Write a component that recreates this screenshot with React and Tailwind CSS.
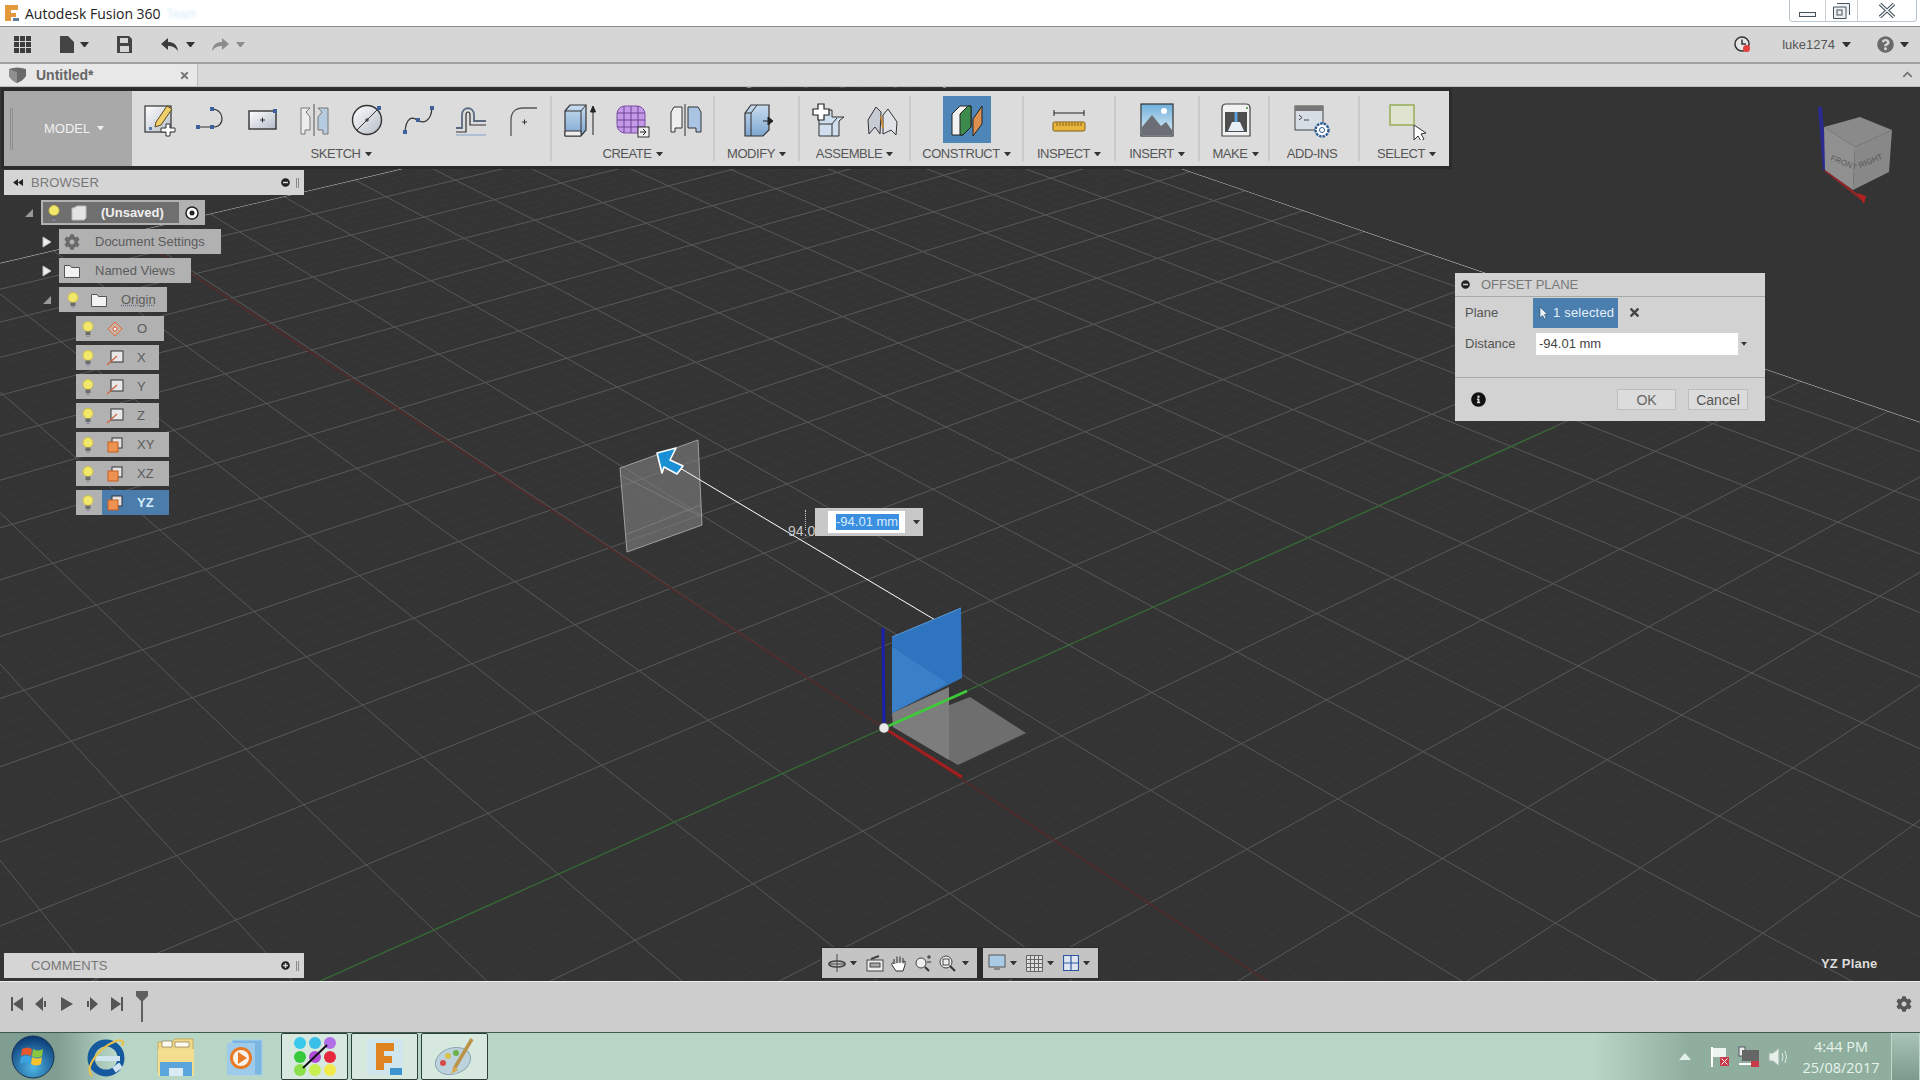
import React from "react";
import { FaCog, FaInfoCircle, FaQuestionCircle, FaTimes, FaChevronUp, FaMinusCircle, FaPlusCircle } from "react-icons/fa";

const Caret = ({ size = 8, color = "#444" }) => (
  <svg width={size} height={size * 0.65} viewBox="0 0 8 5" className="shrink-0">
    <path d="M0 0h8L4 5z" fill={color} />
  </svg>
);

// grid, built from the two vanishing points of the ground plane
const VR = [-1224, -665];
const VG = [3984, -665];
const ORIGIN_Y = 728;
const gridPath = (v, step, from, to) => {
  let d = "";
  for (let k = from; k <= to; k++) {
    const x = 884 + k * step;
    const t = (1000 - v[1]) / (ORIGIN_Y - v[1]);
    d += `M${v[0]} ${v[1]}L${(v[0] + (x - v[0]) * t).toFixed(1)} 1000`;
  }
  return d;
};
const minorPath = gridPath(VR, 33, -120, 200) + gridPath(VG, 38.8, -200, 120);
const majorPath = gridPath(VR, 165, -24, 40) + gridPath(VG, 194, -40, 24);

const Viewport = () => (
  <svg viewBox="0 87 1920 894" className="block h-full w-full">
    <defs>
      <clipPath id="gridClip">
        <path d="M0 263L865 60L1920 422V981H0z" />
      </clipPath>
      <linearGradient id="boxBlue" x1="0" y1="0" x2="0" y2="1">
        <stop offset="0" stopColor="#c8dcf0" />
        <stop offset="1" stopColor="#7ea6cf" />
      </linearGradient>
      <linearGradient id="paper" x1="0" y1="0" x2="1" y2="1">
        <stop offset="0" stopColor="#ffffff" />
        <stop offset="1" stopColor="#b4bcc8" />
      </linearGradient>
      <linearGradient id="sky" x1="0" y1="0" x2="0" y2="1">
        <stop offset="0" stopColor="#6fb0dc" />
        <stop offset="1" stopColor="#e4f0f6" />
      </linearGradient>
    </defs>
    <g clipPath="url(#gridClip)" fill="none">
      <path d={minorPath} stroke="#393939" strokeWidth="1" />
      <path d={majorPath} stroke="#585858" strokeWidth="1" />
    </g>
    <path d="M0 263L865 60M865 60L1920 422" stroke="#d6d6d6" strokeWidth="1" fill="none" clipPath="url(#gridClip)" />
    <path d="M100 214L884 728L1267 981" stroke="#4f2c2c" strokeWidth="2" fill="none" clipPath="url(#gridClip)" />
    <path d="M1555 427L884 728L320 981" stroke="#2f6a2f" strokeWidth="1.2" fill="none" />

    {/* offset plane */}
    <path d="M620 468L698 440L702 525L627 552z" fill="#808080" fillOpacity="0.62" stroke="#a0a0a0" strokeWidth="1" />
    <path d="M622 476L700 516M625 535L701 505" stroke="#9c9c9c" strokeOpacity="0.45" fill="none" />
    <path d="M680 468L947 627" stroke="#fff" strokeWidth="1" />

    {/* origin planes */}
    <path d="M893 727L970 697L1026 733L958 765z" fill="#6e6e6e" />
    <path d="M892 713L949 687V760L893 727z" fill="#7d7d7d" />
    <path d="M892 637L961 608L962 678L892 713z" fill="#2f74bf" />
    <path d="M892 647L947 683L892 713z" fill="#3a80c9" />
    <path d="M892 637L961 608" stroke="#5a9ad8" strokeWidth="1" />
    <path d="M883 628L884 728" stroke="#1a1fb0" strokeWidth="3" />
    <path d="M884 728L962 777" stroke="#a31f1f" strokeWidth="3" />
    <path d="M884 728L967 691" stroke="#3ecb3a" strokeWidth="2.5" />
    <circle cx="884" cy="728" r="5" fill="#e9e9e9" stroke="#444" strokeWidth="0.5" />

    {/* drag handle */}
    <path d="M657 453L676 448L670 460L683 466L677 474L664 467L662 473z" fill="#1b8fd4" stroke="#fff" strokeWidth="1.6" strokeLinejoin="round" />

    {/* view cube */}
    <path d="M1820 107L1825 170" stroke="#2a2a90" strokeWidth="4" />
    <path d="M1825 170L1863 200" stroke="#8f2626" strokeWidth="2.5" />
    <path d="M1857 193L1866 196L1864 204z" fill="#b22222" />
    <path d="M1824 127L1860 117L1892 130L1855 147z" fill="#8a8a8a" />
    <path d="M1824 127L1855 147L1853 190L1825 170z" fill="#909090" />
    <path d="M1855 147L1892 130L1889 172L1853 190z" fill="#888" />
    <text x="1830" y="160" fontSize="8" fill="#5a5a5a" fontFamily="Liberation Sans" transform="rotate(22 1830 160)">FRONT</text>
    <text x="1860" y="168" fontSize="8" fill="#555" fontFamily="Liberation Sans" transform="rotate(-22 1860 168)">RIGHT</text>
  </svg>
);

const Ico = ({ children, size = 40 }) => (
  <svg width={size} height={size} viewBox="0 0 40 40" className="shrink-0">
    {children}
  </svg>
);

const SketchNew = () => (
  <Ico>
    <rect x="6" y="6" width="26" height="26" fill="url(#paper)" stroke="#333" strokeWidth="1.2" />
    <path d="M17 22L28 6L33 9L22 25L16 27z" fill="#f0cf6a" stroke="#5a4a20" />
    <path d="M22 28h5v-4h4v4h5v4h-5v4h-4v-4h-5z" fill="#fff" stroke="#333" />
    <rect x="10" y="27" width="3" height="3" fill="#5a78b0" />
  </Ico>
);
const SketchLine = () => (
  <Ico>
    <path d="M7 27H23C34 27 34 9 21 9" fill="none" stroke="#333" strokeWidth="1.2" />
    <rect x="5" y="25" width="4" height="4" fill="#40609c" />
    <rect x="19" y="25" width="4" height="4" fill="#40609c" />
    <rect x="19" y="7" width="4" height="4" fill="#40609c" />
  </Ico>
);
const SketchRect = () => (
  <Ico>
    <rect x="6" y="11" width="27" height="18" fill="url(#paper)" stroke="#333" strokeWidth="1.4" />
    <path d="M17 20h5M19.5 17.500v5" stroke="#333" />
    <rect x="30" y="9" width="4" height="4" fill="#40609c" />
  </Ico>
);
const SketchMirror = () => (
  <Ico>
    <path d="M19 4v32" stroke="#555" />
    <path d="M15 8H6v26h4v-4h5V17L11 12z" fill="#ececec" stroke="#777" />
    <path d="M23 8h10v26h-5v-4h-5V17l4-5z" fill="#b7cbe0" stroke="#777" />
  </Ico>
);
const SketchCircle = () => (
  <Ico>
    <circle cx="20" cy="20" r="14.500" fill="url(#paper)" stroke="#333" strokeWidth="1.4" />
    <path d="M9 31L31 9" stroke="#333" />
    <path d="M18 20h4M20 18v4" stroke="#333" />
    <rect x="30" y="6" width="4" height="4" fill="#40609c" />
  </Ico>
);
const SketchSpline = () => (
  <Ico>
    <path d="M6 32C7 18 13 16 18 20C24 24 32 22 33 8" fill="none" stroke="#333" strokeWidth="1.2" />
    <rect x="4" y="30" width="4" height="4" fill="#40609c" />
    <rect x="17" y="18" width="4" height="4" fill="#40609c" />
    <rect x="31" y="6" width="4" height="4" fill="#40609c" />
  </Ico>
);
const SketchOffset = () => (
  <Ico>
    <path d="M5 28H11V15C11 6 23 6 23 15V21H35" fill="none" stroke="#5a6a80" strokeWidth="1.8" />
    <path d="M5 32H15V15C15 11 19 11 19 15V25H35" fill="none" stroke="#333" strokeWidth="1.2" />
    <path d="M5 35H35" stroke="#aebfd4" strokeWidth="2" />
  </Ico>
);
const SketchFillet = () => (
  <Ico>
    <path d="M8 36V20C8 12 13 8 20 8H34" fill="none" stroke="#555" strokeWidth="1.3" />
    <path d="M19 22h5M21.500 19.500v5" stroke="#333" />
  </Ico>
);
const CreateBox = () => (
  <Ico>
    <path d="M5 11L10 5H26V30L21 36H5z" fill="url(#boxBlue)" stroke="#333" strokeWidth="1.2" />
    <path d="M5 11H21V36M21 11L26 5" fill="none" stroke="#333" />
    <path d="M5 31H21V36H5z" fill="#eee" stroke="#333" />
    <path d="M33 35V9M30.500 12L33 6L35.500 12z" fill="#222" stroke="#222" />
  </Ico>
);
const CreateForm = () => (
  <Ico>
    <rect x="5" y="6" width="28" height="27" rx="8" fill="#c49ae6" stroke="#7b4fa6" />
    <path d="M5 13H33M5 20H33M5 27H33M12 6V33M19 6V33M26 6V33" stroke="#6f4199" fill="none" />
    <rect x="26" y="27" width="11" height="10" fill="#eee" stroke="#333" />
    <path d="M28 32h6M31 29l3 3-3 3" fill="none" stroke="#222" />
  </Ico>
);
const CreateMirror = () => (
  <Ico>
    <path d="M20 4v32" stroke="#333" />
    <path d="M17 7H9L6 12v20h4v-4h7z" fill="#eee" stroke="#333" />
    <path d="M23 7h10l3 5v20h-5v-4h-8z" fill="#a9c5e3" stroke="#333" />
  </Ico>
);
const ModifyPress = () => (
  <Ico>
    <path d="M8 13L14 5H32V30L26 36H8z" fill="url(#boxBlue)" stroke="#333" strokeWidth="1.2" />
    <path d="M14 13L20 5M14 13V36M14 13H8" fill="none" stroke="#333" />
    <path d="M26 21h8M31 17l5 4-5 4z" fill="#222" stroke="#222" />
  </Ico>
);
const AssembleNew = () => (
  <Ico>
    <path d="M11 14V36H31V21L36 17H24V10H11z" fill="#cfdfee" stroke="#333" />
    <path d="M11 24H24V36M24 24L29 18" fill="none" stroke="#333" />
    <path d="M5 9h5V4h6v5h5v6h-5v5h-6v-5H5z" fill="#fff" stroke="#222" strokeWidth="1.2" />
  </Ico>
);
const AssembleJoint = () => (
  <Ico>
    <path d="M7 34L6 20L14 7L19 12L18 34L13 27z" fill="#c7ccd4" stroke="#333" />
    <path d="M21 34V15L26 9L35 22L34 35L29 30z" fill="#dfe3e8" stroke="#333" />
    <path d="M19 16L21 28" stroke="#c68a3c" strokeWidth="2" />
  </Ico>
);
const ConstructPlane = () => (
  <Ico>
    <path d="M5 14L13 6H24V27L16 35H5z" fill="#f2f2f2" stroke="#222" />
    <path d="M13 14L21 6H24V27L16 35H13z" fill="#3e8a4c" stroke="#222" />
    <path d="M26 36V19L35 6V24z" fill="#dc8f4e" stroke="#222" />
  </Ico>
);
const InspectMeasure = () => (
  <Ico>
    <path d="M5 13H35M5 10V16M35 10V16" stroke="#222" strokeWidth="1" fill="none" />
    <rect x="4" y="22" width="32" height="9" rx="1.5" fill="#e9b53f" stroke="#7c5d14" />
    <path d="M8 23v3M11 23v3M14 23v3M17 23v3M20 23v3M23 23v3M26 23v3M29 23v3M32 23v3" stroke="#7c5d14" />
  </Ico>
);
const InsertImage = () => (
  <Ico>
    <rect x="4" y="4" width="32" height="32" fill="url(#sky)" stroke="#333" strokeWidth="1.2" />
    <circle cx="27" cy="11" r="3" fill="#fff" />
    <path d="M5 35V27L15 15L24 26L29 22L35 30V35z" fill="#6b6f75" />
  </Ico>
);
const MakePrint = () => (
  <Ico>
    <path d="M6 8Q6 4 10 4H30Q34 4 34 8V36H6z" fill="#f2f2f2" stroke="#444" strokeWidth="1.2" />
    <rect x="9" y="12" width="22" height="20" fill="#4e4e4e" />
    <path d="M12 31L16 22H24L28 31z" fill="#e6eef6" />
    <path d="M20 12V22" stroke="#5ba0dc" strokeWidth="3" />
    <circle cx="31" cy="8" r="1" fill="#3a8a3a" />
  </Ico>
);
const AddIns = () => (
  <Ico>
    <rect x="3" y="6" width="28" height="24" fill="#d7dde4" stroke="#444" />
    <rect x="3" y="6" width="28" height="5" fill="#777" />
    <path d="M7 15l3 2.500-3 2.500M12 20h5" fill="none" stroke="#444" />
    <circle cx="30" cy="30" r="6.500" fill="#fff" stroke="#2c5c94" strokeWidth="2.4" strokeDasharray="2.500 1" />
    <circle cx="30" cy="30" r="2.500" fill="#fff" stroke="#2c5c94" />
  </Ico>
);
const SelectWindow = () => (
  <Ico>
    <rect x="3" y="5" width="24" height="20" fill="#dfe3d0" stroke="#9bb060" strokeWidth="1.6" />
    <path d="M27 25V40L31 36L34 41L37 39L34 34L39 33z" fill="#fff" stroke="#333" />
  </Ico>
);

const ToolLabel = ({ label, caret }) => (
  <div className="mt-[4px] flex h-[14px] items-center gap-[4px] text-[13px] tracking-[-0.45px] text-[#565656]">
    <span>{label}</span>
    {caret && <Caret size={7} color="#333" />}
  </div>
);

const ToolGroup = ({ label, caret = true, className = "", children }) => (
  <div className={`flex h-[65px] my-[5px] flex-col items-center border-r-2 border-[#cacaca] ${className}`}>
    <div className="flex h-[47px] items-center justify-center">{children}</div>
    <ToolLabel label={label} caret={caret} />
  </div>
);

const Cell = ({ children, className = "w-[52px]" }) => <div className={`flex justify-center ${className}`}>{children}</div>;

const Toolbar = () => (
  <div className="flex h-[75px] w-[1445px] bg-[#dcdcdc] outline-[3px] outline-[#2b2b2b]">
    <div className="flex w-[128px] items-center bg-[#a9a9a9] pl-[6px]">
      <div className="h-[42px] w-[3px] border-x border-[#8d8d8d]" />
      <span className="ml-[31px] text-[13px] text-[#f0f0f0]">MODEL</span>
      <span className="ml-[7px]"><Caret size={7} color="#eee" /></span>
    </div>
    <ToolGroup label="SKETCH" className="w-[420px]">
      {[SketchNew, SketchLine, SketchRect, SketchMirror, SketchCircle, SketchSpline, SketchOffset, SketchFillet].map((Icon, i) => (
        <Cell key={i}><Icon /></Cell>
      ))}
    </ToolGroup>
    <ToolGroup label="CREATE" className="w-[163px]">
      <Cell><CreateBox /></Cell>
      <Cell><CreateForm /></Cell>
      <Cell className="w-[54px]"><CreateMirror /></Cell>
    </ToolGroup>
    <ToolGroup label="MODIFY" className="w-[85px]"><ModifyPress /></ToolGroup>
    <ToolGroup label="ASSEMBLE" className="w-[111px]">
      <Cell className="w-[54px]"><AssembleNew /></Cell>
      <Cell className="w-[54px]"><AssembleJoint /></Cell>
    </ToolGroup>
    <ToolGroup label="CONSTRUCT" className="w-[113px]">
      <div className="flex h-[47px] w-[48px] items-center justify-center bg-[#4f86b8]"><ConstructPlane /></div>
    </ToolGroup>
    <ToolGroup label="INSPECT" className="w-[92px]"><InspectMeasure /></ToolGroup>
    <ToolGroup label="INSERT" className="w-[84px]"><InsertImage /></ToolGroup>
    <ToolGroup label="MAKE" className="w-[70px] pl-[3px]"><MakePrint /></ToolGroup>
    <ToolGroup label="ADD-INS" caret={false} className="w-[90px] pr-[4px]"><AddIns /></ToolGroup>
    <div className="my-[5px] flex h-[65px] w-[88px] flex-col items-center pl-[5px]">
      <div className="flex h-[47px] items-center"><SelectWindow /></div>
      <ToolLabel label="SELECT" caret />
    </div>
  </div>
);

const Bulb = () => (
  <svg width="14" height="18" viewBox="0 0 14 18" className="shrink-0">
    <circle cx="7" cy="6.500" r="5" fill="#f1e76a" stroke="#cfc24a" />
    <path d="M4.500 11.500h5V15h-5z" fill="#6c6c6c" />
    <path d="M5.500 15.500h3V17h-3z" fill="#8a8aa6" />
  </svg>
);
const Folder = () => (
  <svg width="16" height="14" viewBox="0 0 16 14" className="shrink-0">
    <path d="M.5 1.500H6L7.500 3.500H15.500V13.500H.5z" fill="#f2f2f2" stroke="#555" />
  </svg>
);
const OriginPoint = () => (
  <svg width="16" height="16" viewBox="0 0 16 16" className="shrink-0">
    <path d="M8 1L15 8L8 15L1 8z" fill="#c9b3a4" stroke="#e0683a" />
    <circle cx="8" cy="8" r="2" fill="#fff" stroke="#d8532a" />
  </svg>
);
const OriginAxis = () => (
  <svg width="18" height="16" viewBox="0 0 18 16" className="shrink-0">
    <rect x="5" y="1" width="12" height="11" fill="#e8e8e8" stroke="#333" />
    <path d="M1 15L11 6" stroke="#d0623c" strokeWidth="1.2" />
  </svg>
);
const OriginPlane = () => (
  <svg width="16" height="16" viewBox="0 0 16 16" className="shrink-0">
    <rect x="5" y="1" width="10" height="10" fill="#e4e4e4" stroke="#333" />
    <rect x="1" y="5" width="10" height="10" fill="#ee9251" stroke="#c45f1f" />
  </svg>
);
const Tri = ({ open }) => (
  <svg width="10" height="12" viewBox="0 0 10 12" className="shrink-0">
    {open ? <path d="M9 2V10H1z" fill="#9a9a9a" /> : <path d="M1 1L9 6L1 11z" fill="#efefef" stroke="#bbb" />}
  </svg>
);

const PanelBar = ({ title, collapse }) => (
  <div className="flex h-[25px] w-[300px] items-center bg-[#d5d5d5] pr-[5px] text-[13px] text-[#777]">
    <span className="flex w-[27px] justify-center">
      {collapse && (
        <svg width="10" height="7" viewBox="0 0 10 7"><path d="M5 0V7L0 3.500zM10 0V7L5 3.500z" fill="#222" /></svg>
      )}
    </span>
    <span className="flex-1 tracking-[0.1px]">{title}</span>
    {collapse ? <FaMinusCircle size={9} className="text-[#222]" /> : <FaPlusCircle size={9} className="text-[#222]" />}
    <span className="ml-[6px] h-[10px] w-[3px] border-x border-[#888]" />
  </div>
);

const leafRows = [
  { label: "O", icon: OriginPoint, w: "w-[88px]" },
  { label: "X", icon: OriginAxis, w: "w-[83px]" },
  { label: "Y", icon: OriginAxis, w: "w-[83px]" },
  { label: "Z", icon: OriginAxis, w: "w-[83px]" },
  { label: "XY", icon: OriginPlane, w: "w-[93px]" },
  { label: "XZ", icon: OriginPlane, w: "w-[93px]" },
];

const Browser = () => (
  <div className="flex flex-col">
    <PanelBar title="BROWSER" collapse />
    <div className="mt-[5px] flex flex-col gap-[4px] text-[13px] text-[#5c5c5c]">
      <div className="ml-[20px] flex h-[25px] items-center gap-[7px]">
        <Tri open />
        <div className="flex h-[25px] w-[164px] items-center bg-[#b1b1b1] pl-[2px]">
          <div className="flex h-[21px] w-[136px] items-center gap-[10px] bg-[#6f6f6f] pl-[4px]">
            <Bulb />
            <svg width="16" height="16" viewBox="0 0 16 16"><path d="M3 3L6 1H15V13L13 15H1V3z" fill="#e4e4e4" stroke="#bbb" /></svg>
            <span className="ml-[4px] font-bold text-[#f0f0f0]">(Unsaved)</span>
          </div>
          <div className="flex flex-1 justify-center">
            <svg width="14" height="14" viewBox="0 0 14 14"><circle cx="7" cy="7" r="6" fill="#fff" stroke="#222" strokeWidth="1.500" /><circle cx="7" cy="7" r="2.500" fill="#222" /></svg>
          </div>
        </div>
      </div>
      <div className="ml-[38px] flex h-[25px] items-center gap-[7px]">
        <Tri />
        <div className="flex h-[25px] w-[162px] items-center bg-[#b1b1b1] pl-[5px]">
          <FaCog size={16} className="w-[16px] text-[#6a6a6a]" />
          <span className="ml-[15px]">Document Settings</span>
        </div>
      </div>
      <div className="ml-[38px] flex h-[25px] items-center gap-[7px]">
        <Tri />
        <div className="flex h-[25px] w-[132px] items-center bg-[#b1b1b1] pl-[5px]">
          <Folder />
          <span className="ml-[15px]">Named Views</span>
        </div>
      </div>
      <div className="ml-[38px] flex h-[25px] items-center gap-[7px]">
        <Tri open />
        <div className="flex h-[25px] w-[108px] items-center bg-[#b1b1b1] pl-[7px]">
          <Bulb />
          <span className="ml-[11px]"><Folder /></span>
          <span className="ml-[14px] underline decoration-dotted decoration-[#66708c]">Origin</span>
        </div>
      </div>
      {leafRows.map((r) => {
        const Icon = r.icon;
        return (
          <div key={r.label} className={`ml-[72px] flex h-[25px] items-center bg-[#b1b1b1] pl-[5px] ${r.w}`}>
            <Bulb />
            <span className="ml-[11px] flex w-[18px] justify-center"><Icon /></span>
            <span className="ml-[13px]">{r.label}</span>
          </div>
        );
      })}
      <div className="ml-[72px] flex h-[25px] w-[93px] items-center bg-[#b1b1b1] pl-[5px]">
        <Bulb />
        <div className="ml-[7px] flex h-[25px] flex-1 items-center bg-[#4a7dac] pl-[4px]">
          <span className="flex w-[18px] justify-center"><OriginPlane /></span>
          <span className="ml-[13px] font-bold text-[#d7ecf8]">YZ</span>
        </div>
      </div>
    </div>
  </div>
);

const OffsetPlaneDialog = () => (
  <div className="flex h-[148px] w-[310px] flex-col bg-[#d2d2d2] text-[13px] text-[#555]">
    <div className="flex h-[24px] items-center border-b border-[#a8a8a8] pl-[6px] text-[#777]">
      <FaMinusCircle size={9} className="text-[#222]" />
      <span className="ml-[11px]">OFFSET PLANE</span>
    </div>
    <div className="flex h-[31px] items-center pl-[10px]">
      <span className="w-[68px]">Plane</span>
      <div className="flex h-[30px] w-[85px] items-center gap-[5px] bg-[#4a7fb0] pl-[6px] text-[#e6f0f8] tracking-[0.2px]">
        <svg width="9" height="14" viewBox="0 0 9 14"><path d="M1 1V12L3.500 9.500L5.500 13L7 12L5.500 8.500H8.500z" fill="#eaf2f8" stroke="#2a4a68" strokeWidth="0.6" /></svg>
        1 selected
      </div>
      <FaTimes size={13} className="ml-[10px] text-[#444]" />
    </div>
    <div className="mt-[5px] flex h-[22px] items-center pl-[10px]">
      <span className="w-[71px]">Distance</span>
      <div className="flex h-[22px] w-[202px] items-center bg-white pl-[3px] text-[#444]">-94.01 mm</div>
      <span className="ml-[3px]"><Caret size={6} color="#333" /></span>
    </div>
    <div className="mt-[22px] flex flex-1 items-center border-t border-[#a8a8a8] pr-[17px] pl-[16px]">
      <FaInfoCircle size={15} className="text-[#111]" />
      <div className="flex-1" />
      <button className="h-[21px] w-[59px] border border-[#bdbdbd] bg-[#dcdcdc] text-[14px] text-[#666]">OK</button>
      <button className="ml-[12px] h-[21px] w-[60px] border border-[#bdbdbd] bg-[#dcdcdc] text-[14px] text-[#555]">Cancel</button>
    </div>
  </div>
);

const NavBar = () => (
  <div className="flex gap-[6px] bg-[#2b2b2b] p-[1px]">
    <div className="flex h-[30px] w-[155px] items-center gap-[3px] bg-[#c4c4c4] pl-[5px]">
      <svg width="20" height="20" viewBox="0 0 20 20"><path d="M10 1V19M1 11H19" stroke="#444" /><ellipse cx="10" cy="11" rx="8" ry="3" fill="none" stroke="#444" strokeWidth="1.500" /></svg>
      <span className="mr-[6px]"><Caret size={7} color="#333" /></span>
      <svg width="18" height="18" viewBox="0 0 18 18"><rect x="1" y="6" width="16" height="11" fill="#eee" stroke="#444" /><rect x="4" y="9" width="10" height="4" fill="#aaa" stroke="#444" /><path d="M5 5L13 2" stroke="#444" strokeWidth="2" /></svg>
      <svg width="18" height="18" viewBox="0 0 18 18" className="ml-[3px]"><path d="M4 10V5M7 9V2.500M10 9V2.500M13 9.500V4M4 10C3 8 1 9 2 11L6 17H13L15 11L15 7L13 8" fill="#fff" stroke="#333" /></svg>
      <svg width="18" height="18" viewBox="0 0 18 18" className="ml-[3px]"><circle cx="7" cy="9" r="5" fill="#eee" stroke="#444" /><path d="M11 13L15 17" stroke="#333" strokeWidth="2" /><path d="M13 3h4M15 1v4M13 8h4" stroke="#333" /></svg>
      <svg width="18" height="18" viewBox="0 0 18 18" className="ml-[3px]"><circle cx="8" cy="8" r="6" fill="#eee" stroke="#444" /><rect x="5" y="5" width="6" height="6" fill="none" stroke="#444" /><path d="M12 12L17 17" stroke="#333" strokeWidth="2" /></svg>
      <span className="ml-[3px]"><Caret size={7} color="#333" /></span>
    </div>
    <div className="flex h-[30px] w-[115px] items-center gap-[4px] bg-[#c4c4c4] pl-[5px]">
      <svg width="18" height="20" viewBox="0 0 18 20"><rect x="1" y="2" width="16" height="12" fill="#a9cbe6" stroke="#555" /><path d="M6 15h6v2H6z" fill="#888" /></svg>
      <span className="mr-[5px]"><Caret size={7} color="#333" /></span>
      <svg width="17" height="17" viewBox="0 0 17 17"><path d="M.5.500H16.500V16.500H.5zM.5 4.500H16.500M.5 8.500H16.500M.5 12.500H16.500M4.500.500V16.500M8.500.500V16.500M12.500.500V16.500" fill="#ddd" stroke="#666" /></svg>
      <span className="mr-[5px]"><Caret size={7} color="#333" /></span>
      <svg width="16" height="16" viewBox="0 0 16 16"><path d="M.5.500H15.500V15.500H.5zM.5 8H15.500M8 .500V15.500" fill="#dfe6f0" stroke="#2f57a0" strokeWidth="1.200" /></svg>
      <Caret size={7} color="#333" />
    </div>
  </div>
);

const DimensionInput = () => (
  <div className="relative flex h-[28px] w-[108px] items-center bg-[#c8c8c8] pl-[13px]">
    <div className="flex h-[22px] w-[77px] items-center bg-white pl-[8px]">
      <span className="h-[16px] bg-[#3a8fe0] pr-[1px] text-[13px] leading-[16px] text-[#d8ecfb]">-94.01 mm</span>
    </div>
    <span className="ml-[8px]"><Caret size={7} color="#333" /></span>
    <span className="absolute top-[13px] left-[-27px] text-[14px] text-[#c6c6c6]">94.0</span>
    <span className="absolute top-[2px] left-[-10px] h-[20px] border-l border-dotted border-[#ccc]" />
  </div>
);

const Timeline = () => (
  <div className="flex h-[51px] items-center border-t border-[#eee] bg-[#cdcdcd] pr-[8px] pb-[6px] pl-[11px]">
    <svg width="12" height="14" viewBox="0 0 12 14"><path d="M0 0h2v14H0zM12 0V14L2 7z" fill="#555" /></svg>
    <svg width="13" height="14" viewBox="0 0 13 14" className="ml-[12px]"><path d="M8 0V14L0 7zM9 4h2v6H9z" fill="#555" /></svg>
    <svg width="12" height="14" viewBox="0 0 12 14" className="ml-[13px]"><path d="M0 0L12 7L0 14z" fill="#555" /></svg>
    <svg width="13" height="14" viewBox="0 0 13 14" className="ml-[12px]"><path d="M5 0V14L13 7zM2 4h2v6H2z" fill="#555" /></svg>
    <svg width="12" height="14" viewBox="0 0 12 14" className="ml-[13px]"><path d="M0 0V14L10 7zM10 0h2v14h-2z" fill="#555" /></svg>
    <svg width="12" height="32" viewBox="0 0 12 32" className="mt-[6px] ml-[13px]"><path d="M0 0H12V5L7 10V31H5V10L0 5z" fill="#606060" /></svg>
    <div className="flex-1" />
    <FaCog size={16} className="text-[#555]" />
  </div>
);

const StartOrb = () => (
  <svg width="44" height="44" viewBox="0 0 44 44">
    <defs>
      <radialGradient id="orb" cx="0.5" cy="0.75" r="0.7">
        <stop offset="0" stopColor="#4fb6e6" />
        <stop offset="1" stopColor="#0c3f78" />
      </radialGradient>
    </defs>
    <circle cx="22" cy="22" r="21" fill="url(#orb)" stroke="#1a3350" />
    <path d="M11 14Q16 11 21 14L20 21Q15 18 10 21z" fill="#e8582e" />
    <path d="M22 14Q27 17 32 14L31 21Q26 24 21 21z" fill="#8dc63f" />
    <path d="M10 22Q15 19 20 22L19 29Q14 26 9 29z" fill="#3da2e0" />
    <path d="M21 22Q26 25 31 22L30 29Q25 32 20 29z" fill="#f6c22e" />
  </svg>
);
const IeIcon = () => (
  <svg width="42" height="42" viewBox="0 0 42 42">
    <ellipse cx="22" cy="22" rx="15" ry="15" fill="none" stroke="#15599f" strokeWidth="7" />
    <path d="M12 20H36V25H12z" fill="#cfe4ee" />
    <path d="M30 34L37 29" stroke="#cfe4ee" strokeWidth="6" />
    <path d="M8 40C0 32 14 12 32 5C38 3 41 6 38 10" fill="none" stroke="#e8c04a" strokeWidth="2" />
  </svg>
);
const FolderIcon = () => (
  <svg width="42" height="42" viewBox="0 0 42 42">
    <path d="M3 6H17L20 3H38V36H3z" fill="#f0d98a" stroke="#c7a95c" />
    <path d="M7 5h10v6H7zM20 6h14v5H20z" fill="#fdfaf0" stroke="#8a7a50" strokeWidth="0.7" />
    <path d="M3 13H39V40H3z" fill="#f3dd8e" />
    <path d="M5 26H37V40H5z" fill="#5aa5dc" />
    <path d="M14 40V32H28V40z" fill="#dbeaf4" />
  </svg>
);
const MediaIcon = () => (
  <svg width="36" height="40" viewBox="0 0 36 40">
    <rect x="5" y="3" width="30" height="35" fill="#7bb6e2" stroke="#a7cfe9" />
    <rect x="0" y="6" width="28" height="32" fill="#9ecbe9" />
    <circle cx="14" cy="21" r="11" fill="#e87a25" />
    <circle cx="14" cy="21" r="8" fill="#f7f2ea" />
    <path d="M11 15L20 21L11 27z" fill="#e87a25" />
  </svg>
);

const Tile = ({ children }) => (
  <div className="flex h-[47px] w-[67px] items-center justify-center rounded-[2px] border border-[#2e4038] bg-[#d7e8df]">{children}</div>
);

const DotsApp = () => (
  <svg width="42" height="40" viewBox="0 0 42 40">
    {[["#39c9ec", 6, 6], ["#39bfe8", 21, 6], ["#b06ee8", 36, 6], ["#37c93b", 6, 20], ["#b24cd6", 21, 20], ["#e8283c", 36, 20], ["#8be04a", 6, 33], ["#c8ef50", 21, 33], ["#f2e84a", 36, 33]].map(([c, x, y], i) => (
      <circle key={i} cx={x} cy={y} r="6" fill={c} />
    ))}
    <path d="M9 31L33 8" stroke="#111" strokeWidth="2" />
  </svg>
);
const FusionApp = () => (
  <svg width="38" height="38" viewBox="0 0 38 38">
    <rect x="1" y="1" width="36" height="36" fill="#cfe6ef" />
    <path d="M10 5H28V13H18V18H26V25H18V32H10z" fill="#e08422" />
    <path d="M24 30H36V37H24z" fill="#3d94cf" />
  </svg>
);
const PaletteApp = () => (
  <svg width="42" height="42" viewBox="0 0 42 42">
    <ellipse cx="19" cy="25" rx="18" ry="13" fill="#bcd2dc" stroke="#8ba6b2" transform="rotate(-18 19 25)" />
    <circle cx="9" cy="27" r="3" fill="#d64a4a" />
    <circle cx="14" cy="20" r="3" fill="#d9c04a" />
    <circle cx="22" cy="17" r="3" fill="#6bb04a" />
    <path d="M38 3L20 33" stroke="#b99448" strokeWidth="3.500" />
    <path d="M20 30L17 38L24 34z" fill="#d8a84a" />
  </svg>
);

const Taskbar = () => (
  <div className="flex h-[48px] items-center border-t border-[#3e5a50] bg-[linear-gradient(90deg,#7f9d90_0,#7f9d90_3%,#b7d6c6_6%,#b7d6c6_83%,#8fae9e_88%,#8fae9e_100%)]">
    <div className="ml-[11px] flex w-[60px] shrink-0"><StartOrb /></div>
    <div className="ml-[7px] flex w-[53px] shrink-0 justify-center"><IeIcon /></div>
    <div className="ml-[17px] flex w-[56px] shrink-0 justify-center"><FolderIcon /></div>
    <div className="ml-[16px] flex w-[50px] shrink-0 justify-center"><MediaIcon /></div>
    <div className="ml-[11px] flex gap-[3px]">
      <Tile><DotsApp /></Tile>
      <Tile><FusionApp /></Tile>
      <Tile><PaletteApp /></Tile>
    </div>
    <div className="flex-1" />
    <svg width="12" height="7" viewBox="0 0 12 7"><path d="M0 7L6 0L12 7z" fill="#e6f0ea" /></svg>
    <svg width="20" height="22" viewBox="0 0 20 22" className="ml-[19px]"><path d="M2 1V21" stroke="#fff" strokeWidth="2" /><path d="M3 2H16V11H3z" fill="#eef4f0" /><rect x="10" y="11" width="9" height="9" fill="#c83a4a" /><path d="M11.500 12.500L17.500 18.500M17.500 12.500L11.500 18.500" stroke="#fff" /></svg>
    <svg width="22" height="22" viewBox="0 0 22 22" className="ml-[8px]"><rect x="1" y="1" width="6" height="9" fill="#eee" stroke="#556" /><rect x="4" y="4" width="17" height="11" fill="#666" /><path d="M1 18H20" stroke="#fff" strokeWidth="2" /><rect x="13" y="15" width="8" height="6" fill="#c83a4a" /></svg>
    <svg width="22" height="22" viewBox="0 0 22 22" className="ml-[8px]"><path d="M1 7H5L11 2V20L5 15H1z" fill="#e6efe9" stroke="#9db3a7" /><path d="M14 7Q16 11 14 15M17 5Q20 11 17 17" fill="none" stroke="#dfeae4" /></svg>
    <div className="ml-[5px] flex w-[92px] shrink-0 flex-col items-center text-[14.500px] leading-[21px] text-[#e7f3ed] font-['Open_Sans',sans-serif]">
      <span>4:44 PM</span>
      <span>25/08/2017</span>
    </div>
    <div className="ml-[4px] h-full w-[29px] shrink-0 border-x border-[#c3d8cd] bg-[linear-gradient(180deg,#a9c4b6,#7b9a8c)]" />
  </div>
);

const WinButtons = () => (
  <div className="mr-[3px] flex h-[22px] w-[128px] rounded-b-[4px] border border-t-0 border-[#b9c6cf] bg-white">
    <div className="flex w-[36px] items-end justify-center border-r border-[#c6d0d6] pb-[4px]">
      <div className="h-[5px] w-[17px] border border-[#44525c] bg-[#f4f6f7]" />
    </div>
    <div className="flex w-[32px] items-center justify-center border-r border-[#c6d0d6]">
      <svg width="17" height="16" viewBox="0 0 17 16"><path d="M4 .5H16.500V12M.5 4H13V15.500H.5z" fill="#eef1f3" stroke="#44525c" /><rect x="4" y="7" width="5" height="5" fill="none" stroke="#44525c" /></svg>
    </div>
    <div className="flex flex-1 items-center justify-center">
      <svg width="16" height="15" viewBox="0 0 16 15"><path d="M1 1L15 14M15 1L1 14" stroke="#44525c" strokeWidth="3.500" /><path d="M1 1L15 14M15 1L1 14" stroke="#f4f6f7" strokeWidth="1.500" /></svg>
    </div>
  </div>
);

const QuickBar = () => (
  <div className="flex h-[38px] items-center border-t border-b-2 border-t-[#8e8e8e] border-b-[#a0a0a0] bg-[#d6d6d6] text-[#444]">
    <svg width="17" height="17" viewBox="0 0 17 17" className="ml-[14px]">
      <path d="M0 0h5v5H0zM6 0h5v5H6zM12 0h5v5h-5zM0 6h5v5H0zM6 6h5v5H6zM12 6h5v5h-5zM0 12h5v5H0zM6 12h5v5H6zM12 12h5v5h-5z" fill="#3c3c3c" />
    </svg>
    <svg width="14" height="17" viewBox="0 0 14 17" className="ml-[29px]"><path d="M0 0H8L14 6V17H0z" fill="#444" /></svg>
    <span className="ml-[6px]"><Caret size={9} color="#333" /></span>
    <svg width="15" height="17" viewBox="0 0 15 17" className="ml-[28px]"><path d="M0 0H12L15 3V17H0z" fill="#444" /><rect x="3" y="2" width="8" height="5" fill="#d6d6d6" /><rect x="3" y="10" width="9" height="6" fill="#d6d6d6" /></svg>
    <svg width="17" height="13" viewBox="0 0 17 13" className="ml-[29px]"><path d="M0 6L7 0V4C12 4 16 6 17 13C14 9 11 8 7 8V12z" fill="#3c3c3c" /></svg>
    <span className="ml-[8px]"><Caret size={9} color="#333" /></span>
    <svg width="17" height="13" viewBox="0 0 17 13" className="ml-[17px]"><path d="M17 6L10 0V4C5 4 1 6 0 13C3 9 6 8 10 8V12z" fill="#8c8c8c" /></svg>
    <span className="ml-[7px]"><Caret size={9} color="#8c8c8c" /></span>
    <div className="flex-1" />
    <svg width="17" height="17" viewBox="0 0 17 17"><circle cx="8" cy="8" r="7" fill="#e4e4e4" stroke="#333" strokeWidth="1.500" /><path d="M8 3.500V8H12" fill="none" stroke="#333" strokeWidth="1.500" /><circle cx="12.500" cy="12.500" r="3.500" fill="#e2413f" /></svg>
    <span className="ml-[31px] text-[13px] text-[#555]">luke1274</span>
    <span className="ml-[7px]"><Caret size={9} color="#333" /></span>
    <FaQuestionCircle size={17} className="ml-[26px] text-[#6a6a6a]" />
    <span className="mr-[11px] ml-[6px]"><Caret size={9} color="#333" /></span>
  </div>
);

const TabBar = () => (
  <div className="flex h-[23px] border-b border-[#bdbdbd] bg-[#d9d9d9]">
    <div className="flex w-[198px] items-center border-r border-[#bdbdbd] bg-[#e8e8e8] pr-[7px] pl-[9px]">
      <svg width="17" height="16" viewBox="0 0 17 16"><path d="M0 2Q8 -1 17 2V9Q14 14 8 16Q3 14 0 9z" fill="#6a6a6a" /><path d="M8 5V16Q3 14 0 9V2z" fill="#8f8f8f" /></svg>
      <span className="ml-[10px] text-[14px] font-bold text-[#666]">Untitled*</span>
      <div className="flex-1" />
      <FaTimes size={11} className="text-[#777]" />
    </div>
    <div className="flex-1" />
    <FaChevronUp size={11} className="mt-[5px] mr-[7px] text-[#777]" />
  </div>
);

export default function App() {
  return (
    <div className="flex h-[1080px] w-[1920px] flex-col overflow-hidden bg-[#343434] font-['Liberation_Sans',sans-serif]">
      <div className="flex h-[26px] items-start bg-white">
        <svg width="18" height="18" viewBox="0 0 18 18" className="mt-[4px] ml-[3px]">
          <path d="M2 1H15V6H8V9H13V13H8V17H2z" fill="#e49a3c" />
          <rect x="10" y="14" width="6" height="3" fill="#5f7f9c" />
        </svg>
        <span className="ml-[4px] pt-[4px] font-['Open_Sans',sans-serif] text-[14px] leading-[20px] text-[#222]">Autodesk Fusion 360</span>
        <span className="ml-[6px] pt-[5px] text-[12px] text-[#d5ebf6] blur-[1px]">Team</span>
        <div className="flex-1" />
        <WinButtons />
      </div>
      <QuickBar />
      <TabBar />

      <div className="relative flex-1 overflow-hidden">
        <Viewport />
        <div className="absolute top-[4px] left-[4px]"><Toolbar /></div>
        <div className="absolute top-[83px] left-[4px]"><Browser /></div>
        <div className="absolute top-[866px] left-[4px]"><PanelBar title="COMMENTS" /></div>
        <div className="absolute top-[186px] left-[1455px]"><OffsetPlaneDialog /></div>
        <div className="absolute top-[421px] left-[815px]"><DimensionInput /></div>
        <div className="absolute top-[860px] left-[821px]"><NavBar /></div>
        <span className="absolute top-[867px] left-[1821px] text-[13px] font-bold tracking-[0.2px] text-[#dcdcdc]">YZ Plane</span>
      </div>

      <Timeline />
      <Taskbar />
    </div>
  );
}
